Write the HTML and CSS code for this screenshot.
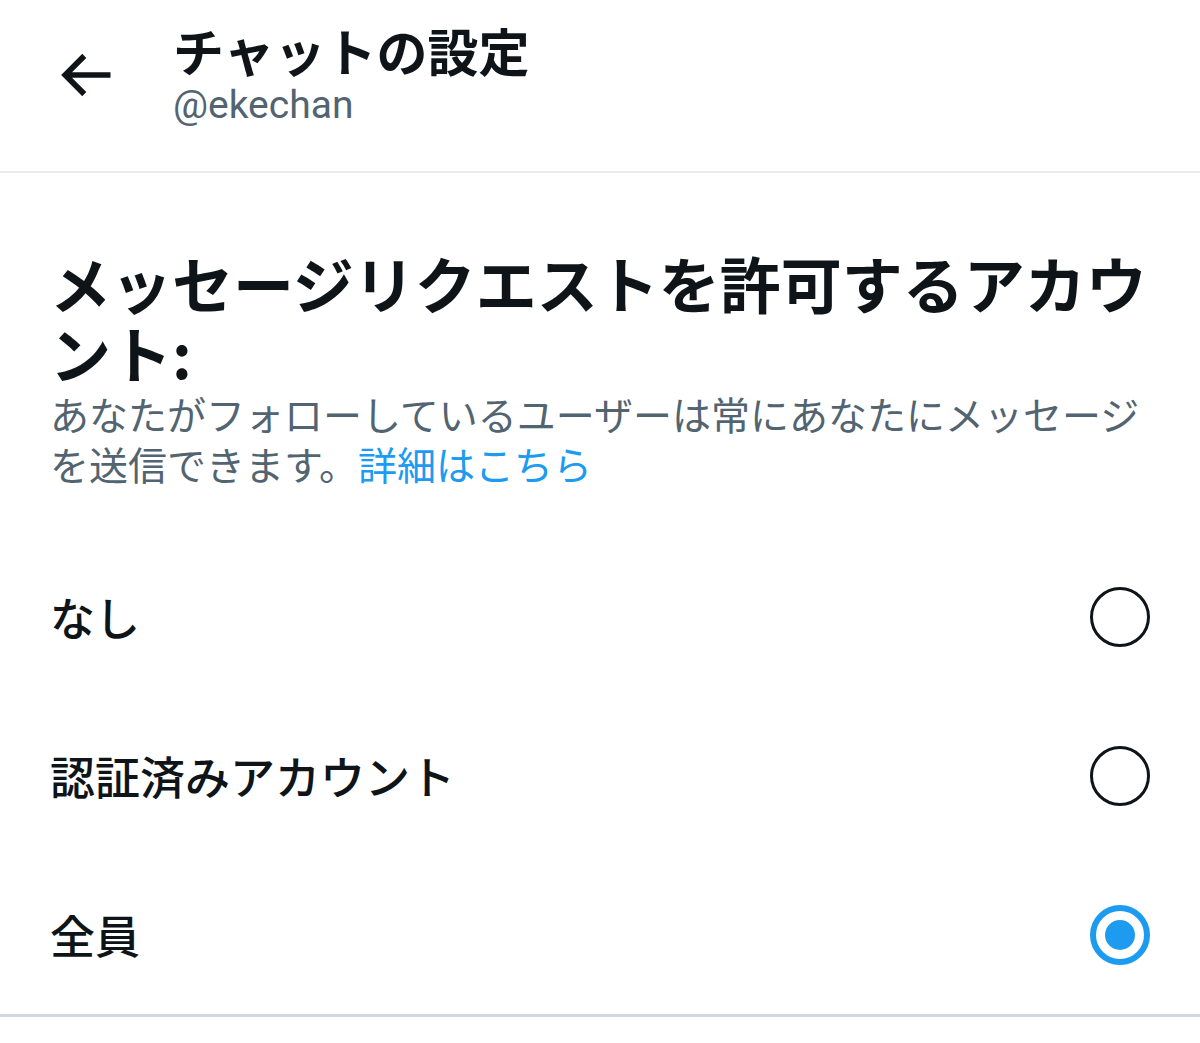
FILE: index.html
```html
<!DOCTYPE html>
<html>
<head>
    <title>チャットの設定</title>
    <link rel="stylesheet" href="styles.css">
</head>
<body>
    <div class="header">
        <div class="back">
            <svg width="68" height="68" viewBox="0 0 24 24">
                <path d="M7.414 13l5.043 5.04-1.414 1.42L3.586 12l7.457-7.46 1.414 1.42L7.414 11H21v2H7.414z" fill="#0f1419"></path>
            </svg>
        </div>
        <div class="titles">
            <div class="title">チャットの設定</div>
            <div class="handle">@ekechan</div>
        </div>
    </div>

    <div class="section">
        <h2 class="heading">メッセージリクエストを許可するアカウント:</h2>
        <p class="desc">あなたがフォローしているユーザーは常にあなたにメッセージを送信できます。<a href="#" class="link">詳細はこちら</a></p>
    </div>

    <div class="options">
        <div class="option">
            <span class="label">なし</span>
            <span class="radio"></span>
        </div>
        <div class="option">
            <span class="label">認証済みアカウント</span>
            <span class="radio"></span>
        </div>
        <div class="option">
            <span class="label">全員</span>
            <span class="radio checked"></span>
        </div>
    </div>
</body>
</html>
```

FILE: styles.css
```css
body {
    margin: 0;
    background: #fff;
    color: #0f1419;
    font-family: Roboto, "Noto Sans CJK JP", sans-serif;
}

.header {
    display: flex;
    align-items: center;
    height: 171px;
    border-bottom: 2px solid #e7ecf0;
    box-sizing: content-box;
}

.back {
    width: 68px;
    height: 68px;
    margin-left: 51px;
    margin-right: 54px;
    margin-top: -22px;
}

.titles {
    display: flex;
    flex-direction: column;
    margin-top: -26px;
}

.title {
    font-family: "Noto Sans CJK JP", sans-serif;
    font-size: 51px;
    font-weight: 700;
    line-height: 64px;
}

.handle {
    font-size: 39px;
    line-height: 46px;
    color: #536471;
}

.section {
    padding: 75px 50px 0 50px;
}

.heading {
    margin: 0;
    font-family: "Noto Sans CJK JP", sans-serif;
    font-size: 61px;
    font-weight: 700;
    line-height: 70px;
}

.desc {
    margin: 0;
    font-family: "Noto Sans CJK JP", sans-serif;
    font-size: 39px;
    line-height: 50px;
    color: #536471;
}

.link {
    color: #1d9bf0;
    text-decoration: none;
}

.options {
    margin-top: 49px;
    border-bottom: 3px solid #cfd9de;
}

.option {
    display: flex;
    align-items: center;
    justify-content: space-between;
    height: 159px;
    padding: 0 50px;
}

.label {
    font-family: "Noto Sans CJK JP", sans-serif;
    font-size: 45px;
    font-weight: 500;
}

.radio {
    width: 54px;
    height: 54px;
    border: 3px solid #0f1419;
    border-radius: 50%;
    box-sizing: content-box;
}

.radio.checked {
    width: 48px;
    height: 48px;
    border: 6px solid #1d9bf0;
    position: relative;
}

.radio.checked::after {
    content: "";
    position: absolute;
    left: 9px;
    top: 9px;
    width: 30px;
    height: 30px;
    border-radius: 50%;
    background: #1d9bf0;
}
```
